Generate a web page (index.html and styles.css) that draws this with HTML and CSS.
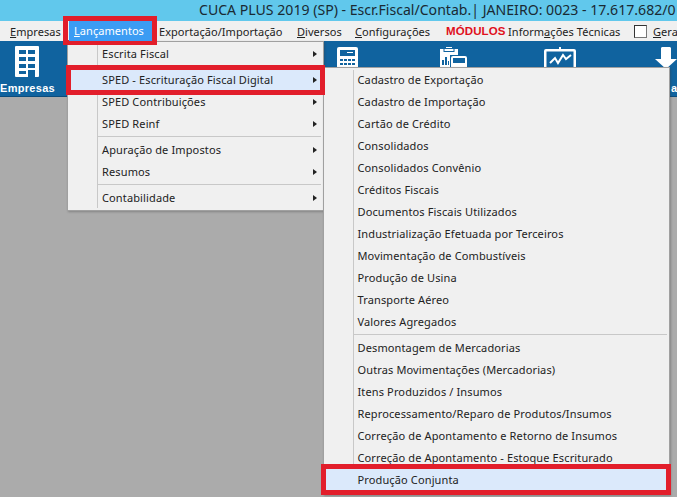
FILE: index.html
```html
<!DOCTYPE html>
<html lang="pt-BR">
<head>
<meta charset="utf-8">
<title>CUCA PLUS 2019</title>
<link rel="stylesheet" href="styles.css">
</head>
<body>
<header class="titlebar">CUCA PLUS 2019 (SP) - Escr.Fiscal/Contab.| JANEIRO: 0023 - 17.617.682/0</header>
<nav class="menubar">
  <span class="mi m-emp"><u>E</u>mpresas</span>
  <span class="mi m-lan"><u>L</u>ançamentos</span>
  <span class="mi m-exp">Exportação/Importação</span>
  <span class="mi m-div"><u>D</u>iversos</span>
  <span class="mi m-con"><u>C</u>onfigurações</span>
  <span class="mi m-mod">MÓDULOS</span>
  <span class="mi m-inf">Inform<u>a</u>ções Técnicas</span>
  <span class="check"></span>
  <span class="mi m-ger"><u>G</u>era</span>
</nav>
<section class="toolbar">
  <div class="tool t-emp">
    <svg class="ico-b" viewBox="0 0 24 31"><rect width="24" height="31" rx="1" fill="#fff"/><g fill="#10639f"><rect x="4" y="4" width="7" height="4"/><rect x="13" y="4" width="7" height="4"/><rect x="4" y="11" width="7" height="4"/><rect x="13" y="11" width="7" height="4"/><rect x="4" y="18" width="7" height="4"/><rect x="13" y="18" width="7" height="4"/><rect x="4" y="25" width="7" height="3"/><rect x="13" y="24" width="7" height="7"/></g></svg>
    <span class="tool-label">Empresas</span>
  </div>
  <svg class="ico i-calc" viewBox="0 0 21 22"><rect width="21" height="22" rx="2" fill="#fff"/><rect x="3" y="3" width="15" height="6" fill="#10639f"/><rect x="10" y="5" width="6" height="1" fill="#fff"/><g fill="#10639f"><rect x="3" y="12" width="3" height="2"/><rect x="7" y="12" width="3" height="2"/><rect x="11" y="12" width="3" height="2"/><rect x="15" y="12" width="3" height="2"/><rect x="3" y="16" width="3" height="2"/><rect x="7" y="16" width="3" height="2"/><rect x="11" y="16" width="3" height="2"/><rect x="15" y="16" width="3" height="2"/></g></svg>
  <svg class="ico i-clip" viewBox="0 0 29 22"><path d="M2 2h6V0h6v2h6v6H12v14H2z" fill="#fff"/><rect x="6" y="1.500" width="10" height="3" fill="#fff" stroke="#10639f"/><g fill="#10639f"><rect x="4" y="13" width="2" height="5"/><rect x="7" y="10" width="2" height="8"/><rect x="10" y="14" width="1" height="4"/></g><rect x="12" y="8" width="17" height="15" fill="#10639f"/><rect x="13" y="9" width="16" height="14" rx="2" fill="#fff"/><rect x="15" y="11" width="12" height="5" fill="#10639f"/></svg>
  <svg class="ico i-chart" viewBox="0 0 32 22"><path d="M15 0h2v2h13a2 2 0 0 1 2 2v18H0V4a2 2 0 0 1 2-2h13z" fill="#fff"/><rect x="2.500" y="4.500" width="27" height="18" fill="#10639f"/><path d="M6 16l5-5 3 5 5-8 3 4 5-4" fill="none" stroke="#fff" stroke-width="2"/></svg>
  <svg class="ico i-arrow" viewBox="0 0 22 22"><path d="M6 1a2 2 0 0 1 2-1h6a2 2 0 0 1 2 1v11h6l-11 10L0 12h6z" fill="#fff"/></svg>
</section>
<span class="tool-end">a</span>

<div class="menu menu-main">
  <div class="row">Escrita Fiscal<i class="arrow"></i></div>
  <div class="sep"></div>
  <div class="row hot">SPED - Escrituração Fiscal Digital<i class="arrow"></i></div>
  <div class="row">SPED Contribuições<i class="arrow"></i></div>
  <div class="row">SPED Reinf<i class="arrow"></i></div>
  <div class="sep"></div>
  <div class="row">Apuração de Impostos<i class="arrow"></i></div>
  <div class="row">Resumos<i class="arrow"></i></div>
  <div class="sep"></div>
  <div class="row">Contabilidade<i class="arrow"></i></div>
</div>

<div class="menu menu-sub">
  <div class="row">Cadastro de Exportação</div>
  <div class="row">Cadastro de Importação</div>
  <div class="row">Cartão de Crédito</div>
  <div class="row">Consolidados</div>
  <div class="row">Consolidados Convênio</div>
  <div class="row">Créditos Fiscais</div>
  <div class="row">Documentos Fiscais Utilizados</div>
  <div class="row">Industrialização Efetuada por Terceiros</div>
  <div class="row">Movimentação de Combustíveis</div>
  <div class="row">Produção de Usina</div>
  <div class="row">Transporte Aéreo</div>
  <div class="row">Valores Agregados</div>
  <div class="sep"></div>
  <div class="row">Desmontagem de Mercadorias</div>
  <div class="row">Outras Movimentações (Mercadorias)</div>
  <div class="row">Itens Produzidos / Insumos</div>
  <div class="row">Reprocessamento/Reparo de Produtos/Insumos</div>
  <div class="row">Correção de Apontamento e Retorno de Insumos</div>
  <div class="row">Correção de Apontamento - Estoque Escriturado</div>
  <div class="row hot">Produção Conjunta</div>
</div>

<div class="mark mark-a"></div>
<div class="mark mark-b"></div>
<div class="mark mark-c"></div>
</body>
</html>
```
FILE: styles.css
```css
* { box-sizing: border-box; }
html, body { margin: 0; height: 100%; }
body {
  width: 677px;
  height: 497px;
  overflow: hidden;
  position: relative;
  background: #ababab;
  font-family: "Noto Sans", "Open Sans", sans-serif;
  font-size: 11px;
  color: #222;
}
.titlebar {
  height: 21px;
  line-height: 20px;
  padding-left: 199px;
  background: #61c8ec;
  font-size: 14.1px;
  white-space: nowrap;
  overflow: hidden;
  color: #1a2a33;
}
.menubar {
  height: 20px;
  background: #f0f0f0;
  display: flex;
  align-items: center;
  white-space: nowrap;
  letter-spacing: 0.05px;
}
.mi { display: block; flex: none; }
.m-emp { margin-left: 10px; width: 64px; }
.m-lan {
  position: relative;
  z-index: 3;
  width: 83px;
  height: 20px;
  margin-left: -5px;
  margin-right: 7px;
  padding-left: 5px;
  line-height: 20px;
  color: #fff;
  background: #3b9cf3;
}
.m-exp { width: 138px; }
.m-div { width: 58px; }
.m-con { width: 91px; }
.m-mod { width: 62px; color: #e0101c; font-weight: 700; font-family: "Liberation Sans", sans-serif; font-size: 11.5px; letter-spacing: 0.1px; }
.m-inf { width: 126px; }
.m-ger { margin-left: 6px; }
.check {
  flex: none;
  width: 13px;
  height: 13px;
  background: #fff;
  border: 1px solid #777;
  border-top-color: #333;
  border-left-color: #333;
}
.toolbar {
  height: 56px;
  background: #10639f;
  display: flex;
  align-items: flex-start;
  overflow: hidden;
  border-bottom: 1px solid #0b4c7c;
}
.tool { width: 66px; margin-right: 271px; flex: none; display: flex; flex-direction: column; }
.ico-b { width: 24px; height: 31px; margin: 5px 0 0 15px; display: block; }
.tool-label {
  color: #fff;
  font-family: "Liberation Sans", sans-serif;
  font-weight: 700;
  font-size: 11px;
  margin-top: 5px;
  letter-spacing: 0.3px;
}
.ico { flex: none; display: block; margin-top: 6px; height: 22px; }
.i-calc { width: 21px; margin-right: 80px; }
.i-clip { width: 29px; margin-right: 77px; }
.i-chart { width: 32px; margin-right: 79px; }
.i-arrow { width: 22px; }
.tool-end {
  position: absolute;
  left: 671px;
  top: 82px;
  color: #fff;
  font-weight: 700;
  font-family: "Liberation Sans", sans-serif;
}

.menu {
  position: absolute;
  background: #f0f0f0;
  border: 1px solid #a0a0a0;
  padding: 1px 0;
  box-shadow: 1px 1px 2px rgba(60,60,60,0.35);
}
.menu::before {
  content: "";
  position: absolute;
  top: 2px;
  bottom: 2px;
  width: 1px;
  background: #c8c8c8;
}
.menu-main { left: 67px; top: 41px; width: 257px; height: 170px; }
.menu-main::before { left: 29px; }
.menu-sub { left: 323px; top: 67px; width: 347px; height: 428px; }
.menu-sub::before { left: 29px; }
.row {
  height: 22px;
  line-height: 22px;
  padding-left: 33.500px;
  position: relative;
  letter-spacing: 0.13px;
  white-space: nowrap;
}
.menu-main .row { padding-left: 34px; }
.sep { height: 4px; padding-top: 1px; margin-left: 30px; }
.sep::before { content: ""; display: block; height: 1px; background: #c8c8c8; margin-right: 2px; }
.hot { background: #dbe9fb; position: relative; z-index: 1; }
.arrow {
  position: absolute;
  right: 6px;
  top: 8px;
  border-left: 4px solid #222;
  border-top: 3.500px solid transparent;
  border-bottom: 3.500px solid transparent;
}
.mark {
  position: absolute;
  border: 5px solid #e21e2b;
  z-index: 2;
}
.mark-a { left: 63px; top: 16px; width: 94px; height: 29px; }
.mark-b { left: 66px; top: 65px; width: 259px; height: 30px; }
.mark-c { left: 321px; top: 464px; width: 350px; height: 31px; }
```
